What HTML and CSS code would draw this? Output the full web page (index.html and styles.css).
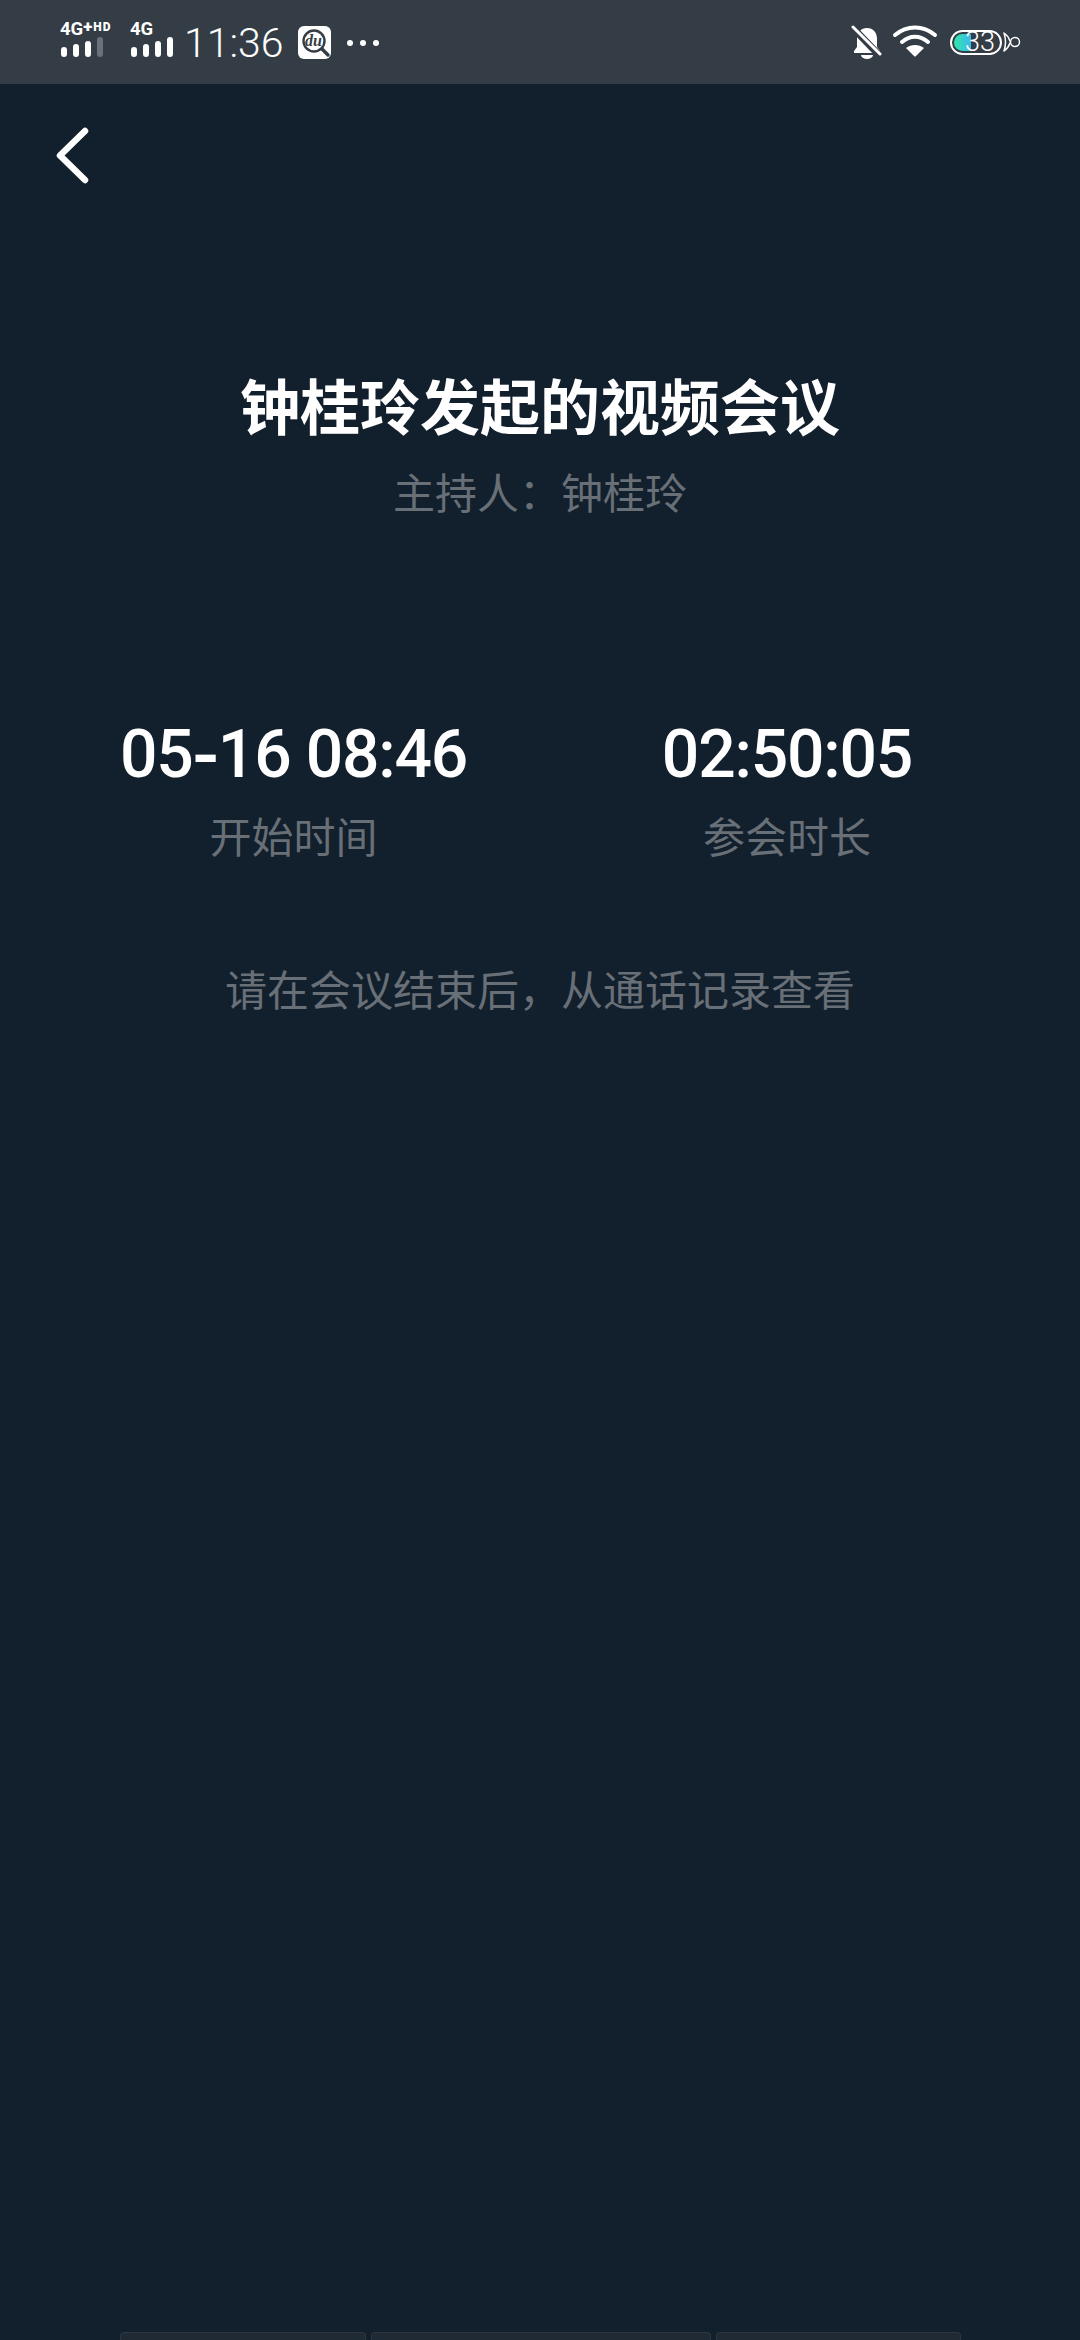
FILE: index.html
```html
<!DOCTYPE html>
<html lang="zh-CN">
<head>
    <meta charset="UTF-8">
    <meta name="viewport" content="width=device-width, initial-scale=1.0">
    <title>视频会议</title>
    <link rel="stylesheet" href="styles.css">
</head>
<body>
    <div class="status-bar">
        <div class="status-left">
            <div class="signal signal-first">
                <div class="net">4G<span class="net-plus">+</span><span class="net-hd">HD</span></div>
                <div class="bars">
                    <i class="bar"></i><i class="bar"></i><i class="bar"></i><i class="bar bar-off"></i>
                </div>
            </div>
            <div class="signal signal-second">
                <div class="net">4G</div>
                <div class="bars">
                    <i class="bar"></i><i class="bar"></i><i class="bar"></i><i class="bar"></i>
                </div>
            </div>
            <span class="clock">11:36</span>
            <svg class="du-icon" width="33" height="33" viewBox="0 0 33 33">
                <rect width="33" height="33" rx="6" fill="#fff"/>
                <circle cx="16" cy="15" r="10.5" fill="none" stroke="#343d46" stroke-width="2.4"/>
                <path d="M24 23l6 6" stroke="#343d46" stroke-width="3.4" stroke-linecap="round"/>
                <text x="15.5" y="20" class="du-text">du</text>
            </svg>
            <div class="dots"><i></i><i></i><i></i></div>
        </div>
        <div class="status-right">
            <svg width="32" height="34" viewBox="0 0 32 34">
                <path d="M16 3c6 0 10 4 10 11v8l3 4v2H3v-2l3-4v-8C6 7 10 3 16 3z" fill="#fff"/>
                <path d="M10 30h12a6 4 0 0 1-12 0z" fill="#fff"/>
                <path d="M3 4l25 26" stroke="#343d46" stroke-width="7"/>
                <path d="M2 2l27 27" stroke="#fff" stroke-width="3" stroke-linecap="round"/>
            </svg>
            <svg class="wifi" width="46" height="34" viewBox="0 0 46 34">
                <g fill="none" stroke="#fff" stroke-width="4" stroke-linecap="round">
                    <path d="M3 10c12-10 28-10 40 0"/>
                    <path d="M10 17c8-7 18-7 26 0"/>
                </g>
                <path d="M14 23c5-4 13-4 18 0l-8 8q-1 1-2 0z" fill="#fff"/>
            </svg>
            <div class="battery">
                <div class="battery-fill"></div>
                <span class="battery-num">33</span>
            </div>
            <svg class="plug" width="18" height="20" viewBox="0 0 18 20">
                <g fill="none" stroke="#fff" stroke-width="1.5" stroke-linecap="round">
                    <path d="M1 1c3 2 5 5 6 8M1 19c3-2 5-5 6-8M1 1c2 6 2 12 0 18"/>
                    <circle cx="12" cy="10" r="4.5"/>
                </g>
            </svg>
        </div>
    </div>

    <div class="main">
        <div class="back">
            <svg width="36" height="60" viewBox="0 0 36 60">
                <path d="M31 6L6 30.5 31 55" fill="none" stroke="#fff" stroke-width="6.5" stroke-linecap="round" stroke-linejoin="round"/>
            </svg>
        </div>

        <div class="heading">
            <h1 class="title">钟桂玲发起的视频会议</h1>
            <p class="muted host">主持人：钟桂玲</p>
        </div>

        <div class="stats">
            <div class="stat">
                <div class="stat-value">05<span class="stat-dash">-</span>16 08:46</div>
                <div class="muted">开始时间</div>
            </div>
            <div class="stat">
                <div class="stat-value">02:50:05</div>
                <div class="muted">参会时长</div>
            </div>
        </div>

        <p class="muted notice">请在会议结束后，从通话记录查看</p>

        <div class="tabs">
            <div class="tab tab-first"></div>
            <div class="tab tab-mid"></div>
            <div class="tab tab-last"></div>
        </div>
    </div>
</body>
</html>
```

FILE: styles.css
```css
* {
    box-sizing: border-box;
}
body {
    margin: 0;
    width: 1080px;
    height: 2340px;
    overflow: hidden;
    display: flex;
    flex-direction: column;
    background: #121f2c;
    color: #fff;
    font-family: Roboto, "Noto Sans CJK SC", sans-serif;
}
.status-bar {
    height: 84px;
    flex-shrink: 0;
    background: #343d46;
    display: flex;
    justify-content: space-between;
    align-items: center;
    padding: 0 59px 0 60px;
}
.status-left, .status-right {
    display: flex;
    align-items: center;
}
.signal {
    display: flex;
    flex-direction: column;
    margin-top: -5px;
}
.signal-first { width: 70px; }
.signal-second { width: 54px; }
.net {
    font-size: 18.5px;
    line-height: 14px;
    font-weight: 700;
    white-space: nowrap;
}
.net-plus {
    font-size: 17px;
    font-weight: 900;
    line-height: 0;
    vertical-align: 3px;
}
.net-hd {
    font-size: 12px;
    font-weight: 900;
    letter-spacing: 1px;
    line-height: 0;
    vertical-align: 4px;
    margin-left: 1px;
}
.bars {
    display: flex;
    align-items: flex-end;
    gap: 6px;
    margin-top: 1px;
    height: 20px;
    padding-left: 1px;
}
.bar {
    width: 6px;
    height: 10px;
    border-radius: 3px;
    background: #fff;
}
.bar:nth-child(2) { height: 13px; }
.bar:nth-child(3) { height: 16px; }
.bar:nth-child(4) { height: 20px; }
.bar-off { background: #69717a; }
.clock {
    font-size: 41px;
    font-weight: 300;
    line-height: 44px;
    margin-top: 2px;
}
.du-icon {
    margin-left: 14px;
}
.du-text {
    font-family: "Liberation Serif", serif;
    font-style: italic;
    font-size: 16px;
    font-weight: 700;
    fill: #343d46;
    text-anchor: middle;
}
.dots {
    display: flex;
    gap: 7px;
    margin-left: 16px;
    margin-top: 1px;
}
.dots i {
    width: 6px;
    height: 6px;
    border-radius: 50%;
    background: #fff;
}
.wifi {
    margin-left: 9px;
}
.battery {
    position: relative;
    width: 52px;
    height: 25px;
    margin-left: 12px;
    border: 2px solid #fff;
    border-radius: 13px;
    display: flex;
    align-items: center;
    justify-content: flex-end;
}
.battery-fill {
    position: absolute;
    left: 2px;
    top: 2px;
    bottom: 2px;
    width: 17px;
    border-radius: 9px 0 0 9px;
    background: linear-gradient(90deg, #2fe8a8, #3fb8ee);
}
.battery-num {
    position: relative;
    font-size: 27px;
    font-weight: 300;
    line-height: 22px;
    margin-right: 5px;
}
.plug {
    margin-left: 1px;
}
.main {
    flex: 1;
    display: flex;
    flex-direction: column;
}
.back {
    padding: 41px 0 0 54px;
    height: 129px;
}
.heading {
    text-align: center;
    margin-top: 157px;
}
.title {
    margin: 0;
    font-size: 60px;
    line-height: 80px;
    font-weight: 700;
}
.muted {
    color: #686f77;
    font-size: 42px;
    line-height: 56px;
}
.host {
    margin: 17px 0 0;
}
.stats {
    display: grid;
    grid-template-columns: 587px 400px;
    margin-top: 192px;
    text-align: center;
}
.stat-value {
    font-size: 66px;
    line-height: 80px;
    font-weight: 500;
    letter-spacing: -1.2px;
    white-space: nowrap;
}
.stat-dash {
    font-size: 78px;
    line-height: 0;
    vertical-align: -5px;
}
.stat .muted {
    margin-top: 16px;
}
.notice {
    margin: 97px 0 0;
    text-align: center;
}
.tabs {
    margin-top: auto;
    display: flex;
    gap: 5px;
    padding-left: 120px;
    height: 8px;
}
.tab {
    height: 8px;
    background: #1f2a34;
    border: 1px solid #2b363f;
    border-bottom: none;
    border-radius: 4px 4px 0 0;
}
.tab-first { width: 246px; }
.tab-mid { width: 340px; }
.tab-last { width: 245px; }
```
